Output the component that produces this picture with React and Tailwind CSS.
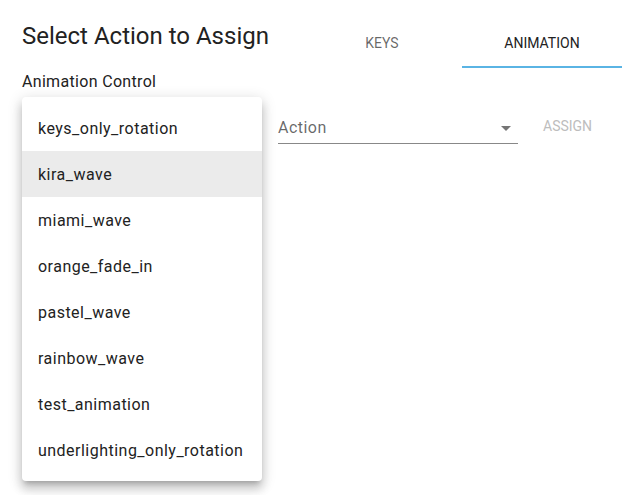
import React from 'react';

const actions = [
  'keys_only_rotation',
  'kira_wave',
  'miami_wave',
  'orange_fade_in',
  'pastel_wave',
  'rainbow_wave',
  'test_animation',
  'underlighting_only_rotation',
];

const App = () => {
  const selected = 'kira_wave';

  return (
    <div
      className="relative w-[628px] h-[495px] bg-white overflow-hidden text-[rgba(0,0,0,0.87)]"
      style={{ fontFamily: 'Roboto, "Open Sans", sans-serif' }}
    >
      <div className="flex items-start pl-[22px] pr-[6px]">
        <h1 className="text-[24px] leading-[28px] pt-[22px] flex-1 text-[#222]">Select Action to Assign</h1>
        <div className="flex shrink-0">
          <button className="w-[160px] h-[68px] pt-[33px] leading-[20px] text-[14px] uppercase text-[rgba(0,0,0,0.6)] border-b-2 border-transparent flex justify-center items-start">
            Keys
          </button>
          <button className="w-[160px] h-[68px] pt-[33px] leading-[20px] text-[14px] uppercase text-[#222] border-b-2 border-[#5ab4e4] flex justify-center items-start">
            Animation
          </button>
        </div>
      </div>

      <div className="px-[22px]">
        <div className="text-[16px] leading-[20px] mt-[4px] text-[#222] tracking-[0.02em]">Animation Control</div>
        <div className="flex items-start gap-4">
          <div className="w-[240px] h-[52px] shrink-0 border-b border-[#888]" />
          <div className="w-[240px] h-[52px] shrink-0 flex items-end border-b border-[#888] pb-[5px]">
            <span className="flex-1 text-[16px] text-[rgba(0,0,0,0.6)] leading-[20px] tracking-[0.03em]">Action</span>
            <svg width="24" height="24" viewBox="0 0 24 24" className="-mb-[2px]">
              <path d="M7 10l5 5 5-5z" fill="rgba(0,0,0,0.54)" />
            </svg>
          </div>
          <button className="shrink-0 mt-[24px] px-[9px] text-[14px] uppercase text-[#bdbdbd] leading-[20px]">
            Assign
          </button>
        </div>
      </div>

      <ul className="absolute left-[22px] top-[97px] w-[240px] py-[8px] bg-white rounded shadow-[0_5px_5px_-3px_rgba(0,0,0,0.2),0_8px_10px_1px_rgba(0,0,0,0.14),0_3px_14px_2px_rgba(0,0,0,0.12)]">
        {actions.map((a) => (
          <li
            key={a}
            className={`h-[46px] flex items-center pt-[2px] px-[16px] text-[16px] text-[#222] tracking-[0.03em] ${a === selected ? 'bg-[#ebebeb]' : ''}`}
          >
            {a}
          </li>
        ))}
      </ul>
    </div>
  );
};

export default App;
